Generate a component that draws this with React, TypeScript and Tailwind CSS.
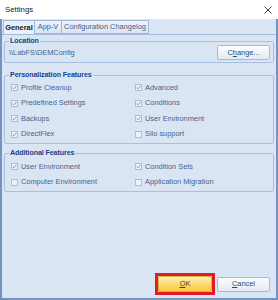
import React from "react";

type Feature = { label: string; checked: boolean };

const personalization: Feature[][] = [
  [
    { label: "Profile Cleanup", checked: true },
    { label: "Advanced", checked: true },
  ],
  [
    { label: "Predefined Settings", checked: true },
    { label: "Conditions", checked: true },
  ],
  [
    { label: "Backups", checked: true },
    { label: "User Environment", checked: true },
  ],
  [
    { label: "DirectFlex", checked: true },
    { label: "Silo support", checked: false },
  ],
];

const additional: Feature[][] = [
  [
    { label: "User Environment", checked: true },
    { label: "Condition Sets", checked: true },
  ],
  [
    { label: "Computer Environment", checked: false },
    { label: "Application Migration", checked: false },
  ],
];

function CheckBox({ checked }: { checked: boolean }) {
  return (
    <span className="flex h-[7px] w-[7px] shrink-0 items-center justify-center border border-[#b3bcc8] bg-[#eef1f5]">
      {checked ? (
        <svg width="5" height="5" viewBox="0 0 5 5">
          <path d="M0.6 2.6 L1.9 3.9 L4.4 0.8" fill="none" stroke="#8a93a0" strokeWidth="0.9" />
        </svg>
      ) : null}
    </span>
  );
}

function FeatureRow({ items }: { items: Feature[] }) {
  return (
    <div className="flex h-[15.5px] items-center">
      {items.map((item, i) => (
        <div key={item.label} className={`flex items-center gap-[3px] ${i === 0 ? "w-[124px]" : ""}`}>
          <CheckBox checked={item.checked} />
          <span className="text-[#46638f]">{item.label}</span>
        </div>
      ))}
    </div>
  );
}

function GroupBox({
  title,
  className,
  children,
}: {
  title: string;
  className: string;
  children: React.ReactNode;
}) {
  return (
    <fieldset className={`rounded-[2px] border border-[#a9bfe0] ${className}`}>
      <legend className="ml-[4px] px-[1px] text-[7.1px] leading-[10px] font-bold tracking-[-0.1px] text-[#15428b]">
        {title}
      </legend>
      {children}
    </fieldset>
  );
}

export default function App() {
  return (
    <div
      className="flex h-[300px] w-[278px] flex-col bg-white text-[7.4px] leading-[10px]"
      style={{ fontFamily: '"Liberation Sans", Arial, sans-serif' }}
    >
      <div className="flex h-[19px] shrink-0 items-center justify-between bg-white pl-[5px] pr-[6px]">
        <span className="text-[7.8px] text-[#1a1a1a]">Settings</span>
        <svg width="8" height="8" viewBox="0 0 8 8">
          <path d="M0.5 0.5 L7.5 7.5 M7.5 0.5 L0.5 7.5" stroke="#333" strokeWidth="0.9" />
        </svg>
      </div>

      <div className="flex flex-1 flex-col border-x-2 border-b-2 border-[#7393c3] bg-[#dae5f4]">
        <div className="ml-[1px] mt-[1px] flex h-[14px] items-stretch">
          <div className="-mb-px flex w-[32px] items-center justify-center border border-b-0 border-[#a3b9da] bg-[#e9f0f9] font-bold text-[#1a1a1a]">
            General
          </div>
          <div className="flex w-[27px] items-center justify-center border border-l-0 border-[#a3b9da] bg-gradient-to-b from-[#eef3fa] to-[#d9e4f3] text-[#3e5f8e]">
            App-V
          </div>
          <div className="flex w-[87px] items-center justify-center border border-l-0 border-[#a3b9da] bg-gradient-to-b from-[#eef3fa] to-[#d9e4f3] text-[#3e5f8e]">
            Configuration Changelog
          </div>
        </div>

        <div className="flex flex-1 flex-col border-t border-[#a3b9da] px-[2px]">
          <GroupBox title="Location" className="mt-[1px]">
            <div className="-mt-[1px] mb-[2px] flex h-[15px] items-center justify-between pl-[4px] pr-[3px]">
              <span className="text-[#46638f]">\\LabFS\DEMConfig</span>
              <button className="flex h-[15px] w-[53px] items-center justify-center rounded-[2px] border border-[#a6b9d6] bg-gradient-to-b from-[#fbfcfe] to-[#e3eaf4] text-[#2d4a75]">
                C<span className="underline">h</span>ange...
              </button>
            </div>
          </GroupBox>

          <GroupBox title="Personalization Features" className="mt-[7px]">
            <div className="pb-[1px] pl-[6px]">
              {personalization.map((row) => (
                <FeatureRow key={row[0].label} items={row} />
              ))}
            </div>
          </GroupBox>

          <GroupBox title="Additional Features" className="mt-[4px]">
            <div className="pb-[1px] pl-[6px] pt-[1px]">
              {additional.map((row) => (
                <FeatureRow key={row[0].label} items={row} />
              ))}
            </div>
          </GroupBox>

          <div className="flex-1" />

          <div className="mb-[3px] flex items-center justify-end gap-[2px] pr-[4px]">
            <div className="border-[3px] border-[#e41b23]">
              <button className="flex h-[16px] w-[54px] items-center justify-center rounded-[2px] border border-[#d9b44a] bg-gradient-to-b from-[#fff1b8] via-[#fedb6d] to-[#fbc93c] text-[#4b3f1a]">
                <span className="underline">O</span>K
              </button>
            </div>
            <button className="flex h-[15px] w-[53px] items-center justify-center rounded-[2px] border border-[#a6b9d6] bg-gradient-to-b from-[#fbfcfe] to-[#e3eaf4] text-[#2d4a75]">
              <span className="underline">C</span>ancel
            </button>
          </div>
        </div>
      </div>
    </div>
  );
}
